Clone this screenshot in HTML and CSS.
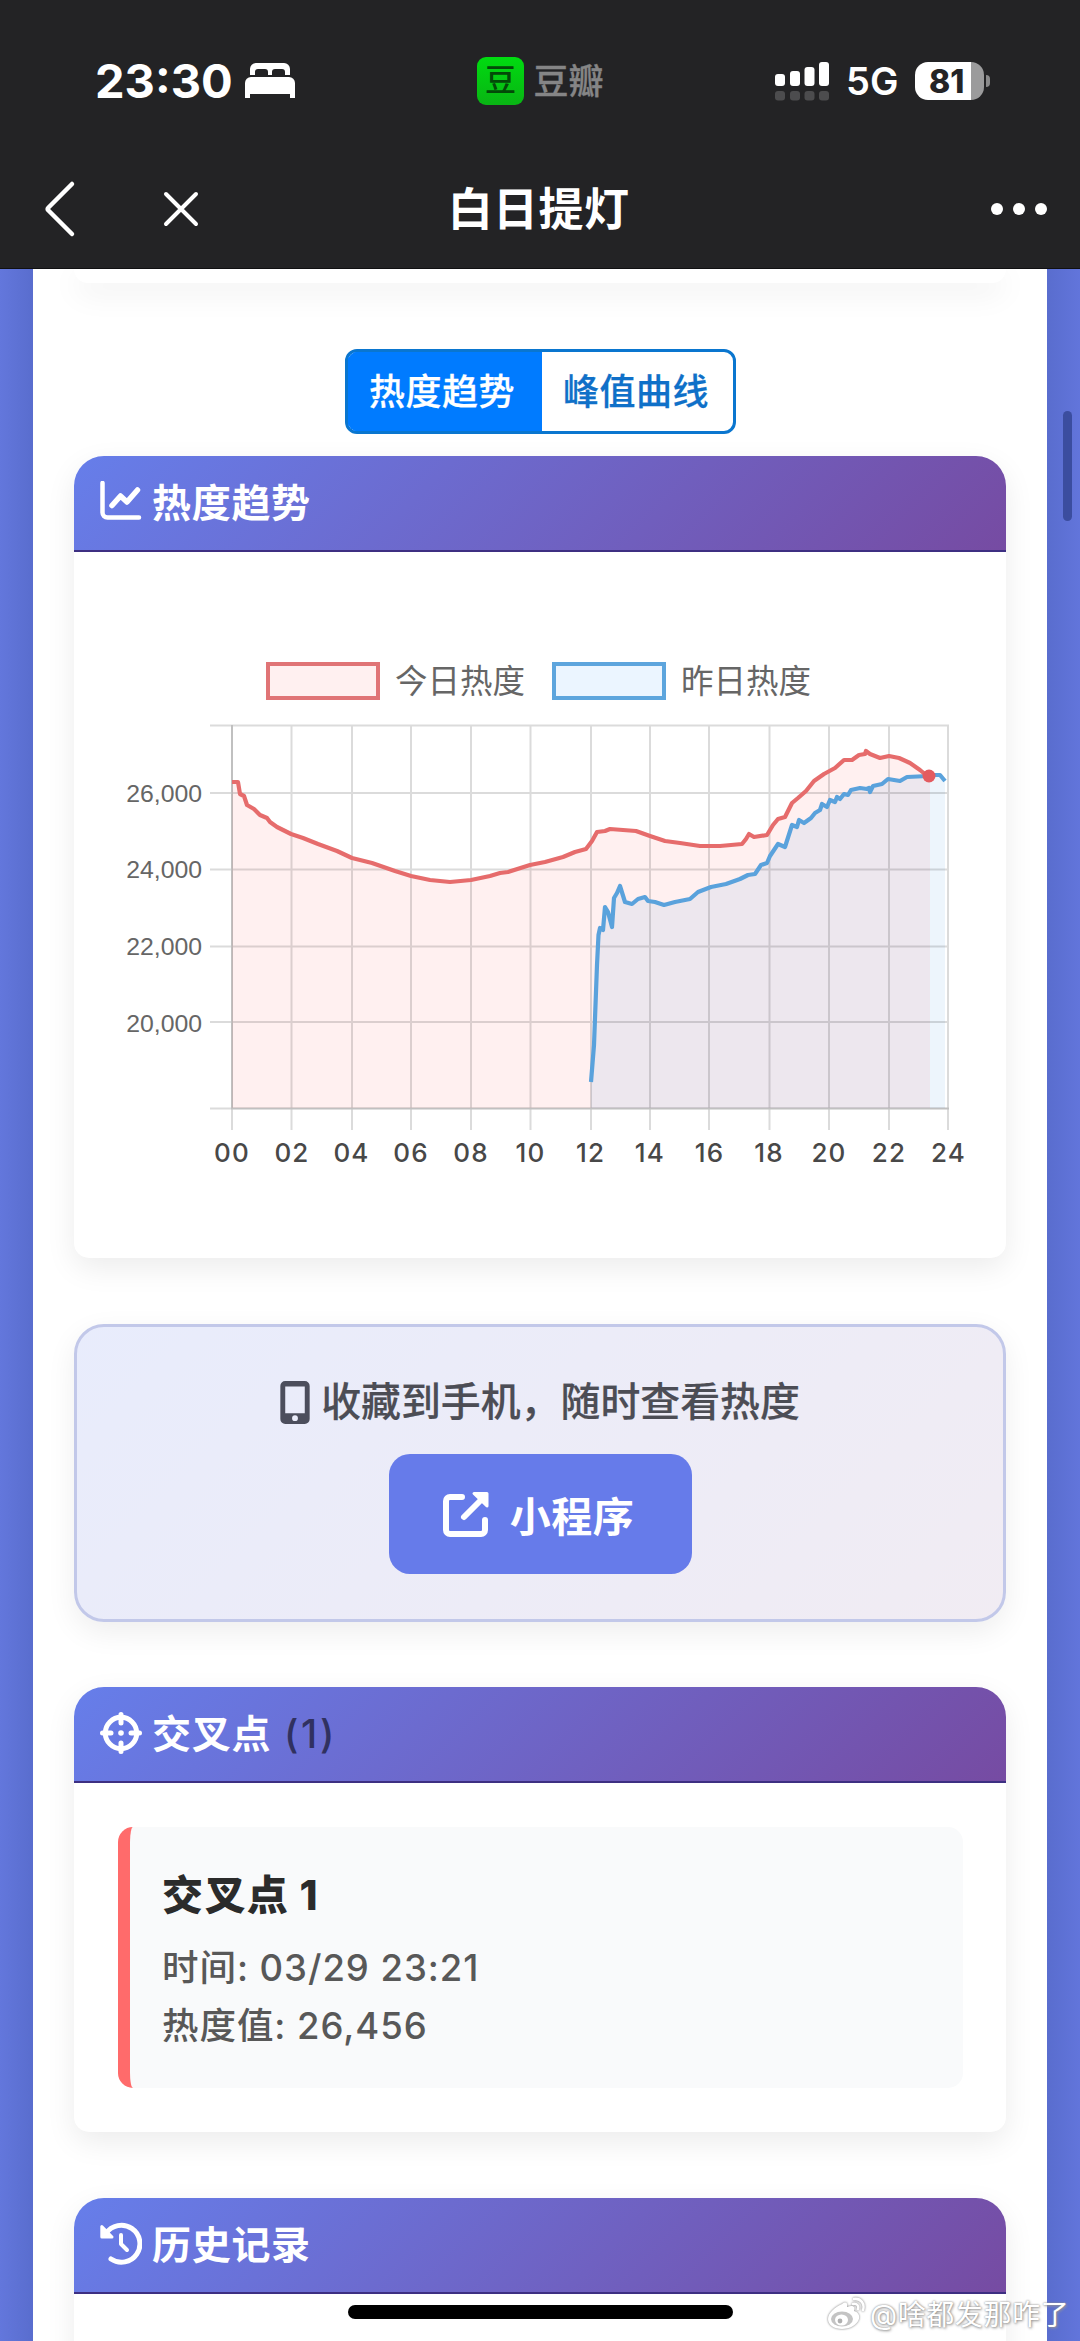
FILE: index.html
```html
<!DOCTYPE html>
<html lang="zh-CN">
<head>
<meta charset="utf-8">
<title>白日提灯</title>
<link rel="stylesheet" href="styles.css">
</head>
<body>
<header class="top">
  <div class="status">
    <div class="status-left">
      <span class="clock">23:30</span>
      <svg class="bed" width="50" height="36" viewBox="0 0 50 36" fill="#fff"><path d="M5 12V6a6 6 0 0 1 6-6h28a6 6 0 0 1 6 6v6h-5V9a3 3 0 0 0-3-3h-7a3 3 0 0 0-3 3v3h-4V9a3 3 0 0 0-3-3h-7a3 3 0 0 0-3 3v3zM0 35V20a6 6 0 0 1 6-6h38a6 6 0 0 1 6 6v15h-5v-4H5v4z"/></svg>
    </div>
    <div class="island">
      <span class="douban">豆</span>
      <span class="douban-name">豆瓣</span>
    </div>
    <div class="status-right">
      <svg width="55" height="40" viewBox="0 0 55 40" fill="#fff"><rect x="0" y="13" width="10" height="12" rx="3"/><rect x="15" y="10" width="10" height="15" rx="3"/><rect x="29.500" y="6" width="10" height="19" rx="3"/><rect x="44" y="1" width="10" height="24" rx="3"/><g fill="#4c4c4e"><rect x="0" y="30" width="10" height="9.500" rx="3"/><rect x="15" y="30" width="10" height="9.500" rx="3"/><rect x="29.500" y="30" width="10" height="9.500" rx="3"/><rect x="44" y="30" width="10" height="9.500" rx="3"/></g></svg>
      <span class="net">5G</span>
      <span class="battery">81</span>
      <span class="battery-tip"></span>
    </div>
  </div>
  <nav class="nav">
    <div class="nav-left">
      <svg width="33" height="58" viewBox="0 0 33 58" fill="none" stroke="#fff" stroke-width="4.500" stroke-linecap="round" stroke-linejoin="round"><path d="M29 4 5.500 27.500q-1.500 1.500 0 3L29 54"/></svg>
      <svg width="36" height="38" viewBox="0 0 36 38" stroke="#fff" stroke-width="4" stroke-linecap="round"><path d="M3 4 33 34M33 4 3 34"/></svg>
    </div>
    <h1>白日提灯</h1>
    <div class="more"><i></i><i></i><i></i></div>
  </nav>
</header>
<main class="page">
  <div class="sheet">
    <section class="card card-tail"></section>
    <div class="tabs"><span class="tab active">热度趋势</span><span class="tab">峰值曲线</span></div>
    <section class="card trend">
      <h2 class="card-head">
        <svg width="42" height="42" viewBox="0 0 42 42" fill="none" stroke="#fff" stroke-linecap="round" stroke-linejoin="round"><path stroke-width="4.500" d="M2.500 2v29.500a5 5 0 0 0 5 5h31.500"/><path stroke-width="5.500" d="M12 24.500 20.500 15 27 21 37.500 9"/></svg>
        <span>热度趋势</span>
      </h2>
      <div class="legend">
        <span class="swatch today"></span><span>今日热度</span>
        <span class="swatch yesterday"></span><span>昨日热度</span>
      </div>
      <svg class="chart" width="932" height="460" viewBox="74 720 932 460">
        <path fill="#ff6b6b" fill-opacity=".1" d="M232 782 238 782 240 794 244 796 247 805 254 809 260 815 267 818 270 822 277 827 291 834 303 838 318 844 337 851 352 858 372 863 395 871 411 876 430 880 450 882 471 880 490 876 500 873 508 872 530 865 545 862 563 857 575 852 586 849 592 841 597 832 605 831 610 829 636 831 650 836 665 841 680 843 700 846 720 846 742 844 746 839 749 834 754 837 767 835 773 825 778 819 785 817 792 803 798 798 806 791 814 781 824 774 835 768 844 760 852 760 859 755 865 754 866 751 870 754 880 758 889 756 899 758 910 763 920 770 926 775 930 776V1108H232z"/>
        <path fill="#4a9fe0" fill-opacity=".1" d="M591 1080 594 1045 597 965 599 930 603 930 605 907 608 912 612 927 614 898 617 893 620 882 625 902 632 904 638 899 645 897 648 901 655 902 664 905 675 902 690 899 698 892 711 887 726 884 740 879 748 875 755 874 761 865 767 863 770 856 778 844 785 847 792 825 797 827 799 820 804 823 811 818 815 813 820 810 822 804 827 807 830 800 835 802 837 797 840 799 844 794 848 795 851 790 860 788 867 789 869 788 870 792 873 786 882 784 888 779 900 781 907 777 928 776 935 775 940 775 945 781V1108H591z"/>
        <path fill="none" stroke="#000" stroke-opacity=".14" stroke-width="2" d="M210 725.500H949M210 793H949M210 869.500H949M210 946.500H949M210 1022H949M210 1108.500H949M232 725V1130M291.500 725V1130M352 725V1130M411 725V1130M471 725V1130M530.500 725V1130M591 725V1130M650 725V1130M709 725V1130M769.500 725V1130M829 725V1130M889 725V1130M948 725V1130"/>
        <path fill="none" stroke="#000" stroke-opacity=".12" stroke-width="2" d="M232 725V1108.500H949"/>
        <path fill="none" stroke="#5aa2dc" stroke-width="4.200" stroke-linejoin="round" d="M591 1082 594 1045 597 965 598.500 935 600 928 603 930 605 907 608 912 612 927 614 898 617 893 620 886 625 902 632 904 638 899 645 897 648 901 655 902 664 905 675 902 690 899 698 892 711 887 726 884 740 879 748 875 755 874 761 865 767 863 770 856 778 844 785 847 792 825 797 827 799 820 804 823 811 818 815 813 820 810 822 804 827 807 830 800 835 802 837 797 840 799 844 794 848 795 851 790 860 788 867 789 869 788 870 792 873 786 882 784 888 779 900 781 907 777 928 776 935 775 940 775 945 781"/>
        <path fill="none" stroke="#e66c6c" stroke-width="4.200" stroke-linejoin="round" d="M232 782 238 782 240 794 244 796 247 805 254 809 260 815 267 818 270 822 277 827 291 834 303 838 318 844 337 851 352 858 372 863 395 871 411 876 430 880 450 882 471 880 490 876 500 873 508 872 530 865 545 862 563 857 575 852 586 849 592 841 597 832 605 831 610 829 636 831 650 836 665 841 680 843 700 846 720 846 742 844 746 839 749 834 754 837 767 835 773 825 778 819 785 817 792 803 798 798 806 791 814 781 824 774 835 768 844 760 852 760 859 755 865 754 866 751 870 754 880 758 889 756 899 758 910 763 920 770 926 775 930 776"/>
        <circle cx="929" cy="776" r="6.500" fill="#e35b60"/>
        <g class="y-labels"><text x="202" y="802">26,000</text><text x="202" y="878">24,000</text><text x="202" y="955">22,000</text><text x="202" y="1032">20,000</text></g>
        <g class="x-labels"><text x="232" y="1162">00</text><text x="292" y="1162">02</text><text x="351.500" y="1162">04</text><text x="411" y="1162">06</text><text x="471" y="1162">08</text><text x="530.500" y="1162">10</text><text x="590.500" y="1162">12</text><text x="650" y="1162">14</text><text x="709.500" y="1162">16</text><text x="769" y="1162">18</text><text x="829" y="1162">20</text><text x="889" y="1162">22</text><text x="948.500" y="1162">24</text></g>
      </svg>
    </section>
    <section class="promo">
      <p class="promo-text">
        <svg width="30" height="43" viewBox="0 0 30 44"><path fill="#4c4e5c" fill-rule="evenodd" d="M5 0h20a5 5 0 0 1 5 5v34a5 5 0 0 1-5 5H5a5 5 0 0 1-5-5V5a5 5 0 0 1 5-5zm0 5.500V33h20V5.500zM15 35a3 3 0 1 0 0 6 3 3 0 0 0 0-6z"/></svg>
        <span>收藏到手机，随时查看热度</span>
      </p>
      <a class="promo-btn">
        <svg width="46" height="46" viewBox="0 0 46 46" fill="none" stroke="#fff" stroke-width="6" stroke-linecap="round" stroke-linejoin="round"><path d="M19 6H7a4 4 0 0 0-4 4v29a4 4 0 0 0 4 4h31a4 4 0 0 0 4-4V29"/><path d="M21 26 40 7"/><path stroke-width="3" fill="#fff" d="M31 2.500H44V15z"/></svg>
        <span>小程序</span>
      </a>
    </section>
    <section class="card cross">
      <h2 class="card-head">
        <svg width="42" height="42" viewBox="0 0 42 42" fill="none" stroke="#fff" stroke-width="5" stroke-linecap="round"><circle cx="21" cy="21" r="15.700"/><path d="M21 2.500V11M21 31v8.500M2.500 21H11M31 21h8.500"/><circle cx="21" cy="21" r="2.800" fill="#fff" stroke="none"/></svg>
        <span>交叉点</span><span class="count">(1)</span>
      </h2>
      <div class="card-body">
        <article class="point">
          <h3>交叉点 1</h3>
          <p>时间: 03/29 23:21</p>
          <p>热度值: 26,456</p>
        </article>
      </div>
    </section>
    <section class="card history">
      <h2 class="card-head">
        <svg width="42" height="44" viewBox="0 0 42 44" fill="none" stroke="#fff" stroke-width="5" stroke-linecap="round" stroke-linejoin="round"><path d="M6 11.500A18.500 18.500 0 1 1 11 37"/><path stroke-width="4" d="M21 13v9l6 6"/><path stroke-width="3" fill="#fff" d="M1.800 4.500V15H12z"/></svg>
        <span>历史记录</span>
      </h2>
    </section>
  </div>
</main>
<div class="scrollbar"></div>
<div class="home"></div>
<div class="watermark">
  <svg width="39" height="34" viewBox="0 0 39 34"><path fill="#fff" d="M15 7c4-3 6-1 5 3 5-2 9-1 7 4 4 1 6 4 5 8-2 6-9 10-17 10C7 32 1 28 1 22 1 16 8 10 15 7z"/><ellipse cx="15" cy="22" rx="11" ry="7.500" fill="#c4c4c4"/><ellipse cx="14.500" cy="23" rx="6.500" ry="5.500" fill="#fff"/><circle cx="13" cy="24" r="2.400" fill="#b0b0b0"/><path d="M27 2c7-1 11 5 9 11M26 7c4-1 6 2 5 5" fill="none" stroke="#fff" stroke-width="2.500" stroke-linecap="round"/></svg>
  <span>@啥都发那咋了</span>
</div>
</body>
</html>
```
FILE: styles.css
```css
* { box-sizing: border-box; }
body {
  margin: 0;
  width: 1080px;
  height: 2341px;
  overflow: hidden;
  position: relative;
  display: flex;
  flex-direction: column;
  font-family: Inter, "Noto Sans CJK SC", sans-serif;
  font-weight: 500;
  background: #6074d9;
}
h1, h2, h3, p { margin: 0; }
svg { display: block; flex: none; }

.top { height: 269px; flex: none; background: #232325; color: #fff; position: relative; border-bottom: 1px solid #101012; }
.status { height: 162px; padding: 0 90px; display: grid; grid-template-columns: 1fr auto 1fr; align-items: center; }
.status-left { display: flex; align-items: center; padding-left: 5px; gap: 13px; }
.clock { width: 137px; font-size: 47px; line-height: 56px; font-weight: 700; letter-spacing: 0; white-space: nowrap; }
.island { display: flex; align-items: center; gap: 9px; width: 127px; }
.douban { width: 48px; height: 48px; border-radius: 9px; background: linear-gradient(#00db10, #09b414); color: #034a08; font-size: 31px; font-weight: 500; line-height: 46px; text-align: center; }
.douban-name { font-size: 35px; line-height: 46px; color: #858586; white-space: nowrap; -webkit-text-stroke: .3px; }
.status-right { display: flex; align-items: center; justify-content: flex-end; }
.net { margin-left: 16px; width: 52px; font-size: 38px; font-weight: 600; line-height: 42px; }
.battery { margin-left: 17px; width: 69px; height: 38px; border-radius: 13px; background: linear-gradient(90deg, #fff 56px, #9b9b9c 56px); color: #232325; font-size: 32px; font-weight: 800; line-height: 39px; padding-left: 14px; }
.battery-tip { width: 4px; height: 12px; margin-left: 2px; background: #8a8a8b; border-radius: 0 6px 6px 0; }

.nav { height: 94px; padding: 0 33px 0 42px; display: grid; grid-template-columns: 1fr auto 1fr; align-items: center; }
.nav-left { display: flex; align-items: center; gap: 87px; padding-left: 1px; }
.nav h1 { font-size: 45px; line-height: 56px; font-weight: 700; margin: 2px 0 0 -12px; letter-spacing: .4px; }
.more { display: flex; justify-content: flex-end; gap: 10px; }
.more i { width: 12px; height: 12px; border-radius: 50%; background: #fff; }

.page { flex: 1; min-height: 0; padding: 0 33px; background: linear-gradient(90deg, #6377dc 0, #596dce 33px, #596dce 1047px, #6275db 100%); }
.sheet { height: 100%; overflow: hidden; background: #fff; padding: 0 41px; }
.card { border-radius: 30px 30px 15px 15px; box-shadow: 0 10px 30px rgba(0, 0, 0, .08); background: #fff; }
.card-tail { height: 14px; border-radius: 0 0 15px 15px; }
.tabs { display: flex; width: 391px; height: 85px; margin: 66px auto 22px; border: 3px solid #0a76cf; border-radius: 12px; overflow: hidden; }
.tab { flex: 1; font-size: 36px; line-height: 80px; letter-spacing: .5px; font-weight: 500; text-align: center; color: #0f70c8; -webkit-text-stroke: .25px; padding-right: 2px; }
.tab.active { background: #007bff; color: #fff; box-shadow: -3px 0 #007bff, 0 -3px #007bff, 0 3px #007bff; padding-right: 5px; }
.card-head { height: 96px; padding: 0 26px 2px; display: flex; align-items: center; gap: 10px; border-bottom: 2px solid #3d2f82; border-radius: 30px 30px 0 0; background: linear-gradient(135deg, #667eea, #764ba2) border-box; color: #fff; font-size: 39px; line-height: 56px; font-weight: 700; letter-spacing: .7px; }
.card-head span { margin-top: 2px; }
.card-head .count { color: #303160; font-weight: 500; margin-left: 3px; letter-spacing: 2.5px; }

.trend { height: 802px; display: flex; flex-direction: column; }
.legend { display: flex; align-items: center; padding-left: 192px; height: 38px; margin-top: 110px; font-size: 32.500px; line-height: 38px; font-weight: 400; color: #666; white-space: nowrap; }
.legend span:not(.swatch) { margin-top: 1px; }
.swatch { width: 114px; height: 38px; border: 4px solid; margin-right: 15px; }
.today { background: #fff0f0; border-color: #e07476; }
.yesterday { background: #ebf5ff; border-color: #5da5dd; margin-left: 27px; }
.chart { margin-top: 20px; }
.y-labels { font-family: "Liberation Sans", sans-serif; font-size: 24.800px; fill: #666; text-anchor: end; font-weight: 400; }
.x-labels { font-size: 26px; font-weight: 500; fill: #484848; text-anchor: middle; letter-spacing: 1.2px; }

.promo { margin-top: 66px; height: 298px; border: 3px solid #c2c8e9; border-radius: 30px; background: linear-gradient(135deg, #e8ecfc, #f1ecf3) border-box; box-shadow: 0 10px 30px rgba(0, 0, 0, .07); display: flex; flex-direction: column; align-items: center; padding-top: 47px; }
.promo-text { display: flex; align-items: center; gap: 11px; font-size: 39.900px; line-height: 56px; color: #4c4d55; white-space: nowrap; -webkit-text-stroke: .2px; }
.promo-btn { margin-top: 24px; width: 303px; height: 120px; border-radius: 21px; background: #667bea; color: #fff; display: flex; align-items: center; justify-content: center; gap: 21px; font-size: 41px; font-weight: 700; letter-spacing: .5px; padding-right: 3px; }

.cross { margin-top: 65px; height: 445px; }
.card-body { padding: 44px 43px 44px 44px; }
.point { height: 261px; padding: 38px 32px; border-left: 12px solid #ff6b6b; border-radius: 15px; background: #f9fafb; color: #585858; font-size: 36.500px; line-height: 58px; letter-spacing: .95px; }
.point h3 { font-size: 41px; line-height: 60px; margin-bottom: 14px; font-weight: 800; color: #2b2b2b; letter-spacing: 1.4px; }
.history { margin-top: 66px; height: 300px; }

/* overlays above the scrolled page */
.scrollbar { position: absolute; left: 1063px; top: 411px; width: 9px; height: 110px; border-radius: 5px; background: #3b4d9f; }
.home { position: absolute; left: 348px; top: 2305px; width: 385px; height: 14px; border-radius: 7px; background: #000; }
.watermark { position: absolute; left: 827px; top: 2297px; display: flex; gap: 4px; color: #fff; font-size: 28px; font-weight: 400; line-height: 36px; letter-spacing: .6px; white-space: nowrap; text-shadow: 0 0 2px #888, 1px 1px 3px #999; }
.watermark svg { filter: drop-shadow(0 0 1px #777); }
```
